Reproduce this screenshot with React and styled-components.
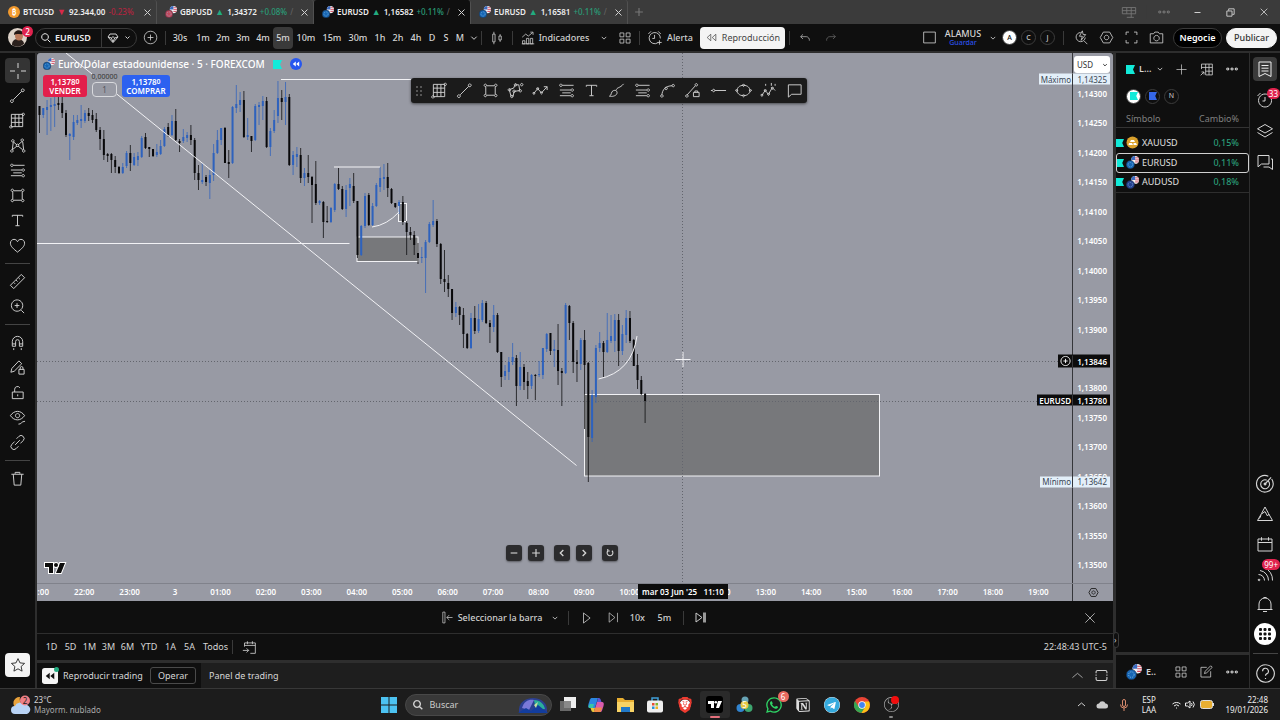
import { FaTelegram, FaWhatsapp } from "react-icons/fa";
import { SiBrave, SiNotion, SiObsstudio } from "react-icons/si";
import styled, { createGlobalStyle, css } from "styled-components";

const GlobalStyle = createGlobalStyle`
  * {
    box-sizing: border-box;
  }
  body {
    margin: 0;
    background: #0f0f0f;
    color: #d6d6d6;
    font: 9px/12px "Noto Sans", "Open Sans", sans-serif;
  }
  button, input, select {
    font: inherit;
    color: inherit;
    background: none;
    border: 0;
    margin: 0;
    padding: 0;
  }
  a {
    color: inherit;
    text-decoration: none;
  }
  svg {
    flex: none;
    display: block;
  }
`;

/* ---------- icons ---------- */

const iconPaths = {
  cross: "M9 1v5M9 12v5M1 9h5M12 9h5",
  line: "M4.5 13.5l9-9M3 13.5a1.5 1.5 0 1 0 .1 0M14.5 2a1.5 1.5 0 1 0 .1 0",
  grid: "M2.5 2.5h12v13h-12zM6.5 2.5v13M10.5 2.5v13M2.5 6.5h12M2.5 11h12M15 1.2a1.3 1.3 0 1 0 .1 0M2 14.5a1.3 1.3 0 1 0 .1 0",
  pattern:
    "M3.5 13.500L4.500 5.500M4.500 5l4 3.500M9.500 8.500L14 4.500M14.500 5l1 8.500M14.500 13.500l-5-4M8.500 9.500l-5 4M4 2.800a1.300 1.300 0 1 0 .1 0M14 2a1.300 1.300 0 1 0 .1 0M9 7.500a1.300 1.300 0 1 0 .1 0M3 13.500a1.300 1.300 0 1 0 .1 0M15.500 13.500a1.300 1.300 0 1 0 .1 0",
  fib: "M4.500 3.500h12M2 8.500h11.500M2 14.500h11.500M4.500 11.500h9M3 2.200a1.300 1.300 0 1 0 .1 0M15 7.200a1.300 1.300 0 1 0 .1 0M15 13.200a1.300 1.300 0 1 0 .1 0",
  rect: "M4 5v8M14 5v8M5 4h8M5 14h8M3.500 2.200a1.300 1.300 0 1 0 .1 0M14.500 2.200a1.300 1.300 0 1 0 .1 0M3.500 13a1.300 1.300 0 1 0 .1 0M14.500 13a1.300 1.300 0 1 0 .1 0",
  text: "M3.5 5V3.5h11V5M9 3.5v11M6.8 14.5h4.4",
  heart:
    "M9 16C5 12.8 1.5 10 1.5 6.600C1.500 4 3.400 2.500 5.300 2.500C7 2.500 8.400 3.500 9 5C9.600 3.500 11 2.500 12.700 2.500C14.600 2.500 16.500 4 16.500 6.600C16.500 10 13 12.800 9 16z",
  ruler: "M1.500 13l11.500-11.500 3.500 3.500-11.500 11.500zM5 10l1.500 1.500M7.500 7.500l1.500 1.500M10 5l1.500 1.500",
  zoomIn: "M8.500 2a6 6 0 1 0 .1 0M13 13l3 3M8.500 5.500v5M6 8h5",
  magnet:
    "M3.500 13V8a5.500 5.500 0 0 1 11 0v5h-3.500V8a2 2 0 0 0-4 0v5zM3.500 10.500h3.500M11 10.500h3.500M5 15v2M13 15v2",
  penLock: "M2 14l1-4 7.500-8 3 3-8 8zM10.500 11h5.500v5h-5.500zM11.800 11V9.500a1.500 1.500 0 0 1 3 0V11",
  unlock: "M3.500 8.500h11.500v7h-11.500zM6 8.500v-3a3 3 0 0 1 5.500-1.500M9.200 11v2",
  eyePen: "M1.500 7c4-6 11-6 15 0-4 6-11 6-15 0zM9 4.800a2.200 2.200 0 1 0 .1 0M10 16c3 .5 3-3 7-3",
  link: "M8 5l2.500-2.500a3 3 0 0 1 4.500 4.500L12 10M10 13l-2.500 2.500a3 3 0 0 1-4.500-4.500L6 8M6.500 11.500l5-5",
  trash: "M2.500 4.500h13M6.500 4V2.500h5V4M4.500 4.500l1 11.500h7l1-11.500",
  star: "M9 1.800l2.200 4.800 5.200.6-3.900 3.500 1.100 5.200L9 13.300l-4.600 2.600 1.100-5.200-3.900-3.500 5.200-.6z",
  search: "M7.500 2.500a5 5 0 1 0 .1 0M11.500 11.500l4 4",
  gem: "M4.500 3h9l3 4.500L9 16 1.500 7.500zM9 15L6.500 9 9 7l2.500 2zM2 7.500l4.500 1.500M16 7.500L11.500 9",
  chevron: "M5 7l4 4 4-4",
  chevronUp: "M2 12l7-6 7 6",
  left: "M11 4.500L6.500 9l4.500 4.500",
  right: "M7 4.500L11.500 9 7 13.500",
  plus: "M9 2v14M2 9h14",
  minus: "M3 9h12",
  circlePlus: "M9 1.500a7.500 7.500 0 1 0 .1 0M9 5.500v7M5.500 9h7",
  candles: "M3.500 4h3v10h-3zM5 1v3M5 14v3M11.500 6.500h3v5h-3zM13 4v2.500M13 11.500V14",
  indicators:
    "M2 16.500v-4h3v4zM7 16.500V9.500h3v7zM12 16.500v-7h3v7zM1.500 8L6 4l3.500 2.500L15 2M12 1.500h3.500V5M1 16.500h16",
  tiles: "M2.500 2.500h5v5h-5zM10.500 2.500h5v5h-5zM2.500 10.500h5v5h-5zM10.500 10.500h5v5h-5z",
  alert: "M12 14.500a6.300 6.300 0 1 1 3-5M8.500 5.500v4H6M1.500 4.500l3-3M12.500 1.500l3 3M14 11.500v5M11.500 14h5",
  rewind: "M8 4.500L3 9l5 4.500zM15 4.500L10 9l5 4.500z",
  undo: "M6 3.500L2.500 7 6 10.500M2.500 7H11a5 5 0 0 1 4.500 6",
  redo: "M12 3.500L15.500 7 12 10.500M15.500 7H7a5 5 0 0 0-4.500 6",
  frame: "M2 2.500h14v13H2z",
  maximize: "M1.500 6V4a2 2 0 0 1 2-2h11a2 2 0 0 1 2 2v2M1.500 11v3a2 2 0 0 0 2 2h11a2 2 0 0 0 2-2v-3M1.500 7.500v2M16.500 7.500v2",
  quick: "M8 3a5.500 5.500 0 1 0 5.500 6M12 13l4 4M10 1L6.500 7.500H10L8.500 12.500 14 5.500h-3z",
  settings: "M5.200 2.500h7.600L16.500 9l-3.700 6.500H5.200L1.500 9zM9 6.300a2.700 2.700 0 1 0 .1 0",
  expand: "M2.500 6V2.500H6M12 2.500h3.500V6M15.500 12v3.500H12M6 15.500H2.500V12",
  camera: "M1.500 4.500h4l1.500-2h4l1.500 2h4v11h-15zM9 6.500a3.300 3.300 0 1 0 .1 0",
  dots: "M3.500 7.700a1.300 1.300 0 1 0 .1 0M9 7.700a1.300 1.300 0 1 0 .1 0M14.500 7.700a1.300 1.300 0 1 0 .1 0",
  table: "M3 2.500h13v13H8M3 2.500v6M3 6.500h13M8 2.500v13M12 2.500v13M8 11h8M2 16l4-4M3 12h3v3",
  list: "M3 2h12v14.500l-6-3-6 3zM5.500 5.500h7M5.500 8.200h7M5.500 11h7",
  clock: "M9 3a6.500 6.500 0 1 0 .1 0M9 6v4H6.500M1.500 5l3-3M13.500 2l3 3",
  layers: "M9 2.500l7.500 4.300L9 11 1.500 6.800zM1.500 10.500L9 15l7.500-4.500",
  chat: "M2 2.500h11v8.500H5.500L2 13.800zM15 6h1.500v10.500L13 14H7.500",
  radar: "M15 4.500A7.500 7.500 0 1 1 12 2M12 6.500a4 4 0 1 1-1.500-1M9 9l5.500-6M9 8.200a.8.8 0 1 0 .1 0",
  pyramid: "M5.500 8.500L9 2l3.500 6.500M5.500 8.500L1.500 15.500h15L12.500 8.500M5.500 9l3.500-2.500 2.500 4.500 1.500-2M5 10.500l-1.500 3",
  calendar: "M2 4h14v12H2zM2 7.500h14M5.500 2.200v3.500M12.500 2.200v3.500",
  feed: "M3 14.200a.8.8 0 1 0 .1 0M2.500 9.500a6 6 0 0 1 6 6M4 5.500a10 10 0 0 1 8.500 10M8 2.500a13 13 0 0 1 8.500 13",
  bell: "M1.500 14.500h15M3 14.500V9a6 6 0 0 1 12 0v5.500M7.500 2.500h3M7 16.500h4",
  help: "M9 1.500a7.500 7.500 0 1 0 .1 0M6.500 7a2.500 2.500 0 1 1 3.500 2.300c-.8.500-1 .9-1 1.700M9 12.800v1",
  edit: "M10 3H2.500v12.500H15V8M7 11l1-3 7-7 2 2-7 7z",
  calGo: "M3 8V3.500h13V16h-6M3 6.500h13M6.500 1.500v3.500M12.500 1.500v3.500M1 12.500h7M5.500 10L8 12.500 5.500 15",
  selectBar: "M2.500 1.500h3v15h-3zM8 9h8M11.500 5.500L8 9l3.500 3.500",
  play: "M4.500 2.500L13 9l-8.500 6.500z",
  next: "M3 2.500L11 9l-8 6.500zM14.500 2.500v13",
  close: "M3 3l12 12M15 3L3 15",
  reset: "M5.500 5A5.200 5.200 0 1 0 12.500 5M5 2v3.500h3.500",
  polyShape:
    "M4 14.500L2.500 8 7 6.500 8.500 3l4 0 1 6-6 1-1 5zM15.500 1.500a1.300 1.300 0 1 0 .1 0M9 1.700a1.300 1.300 0 1 0 .1 0M2.500 7a1.300 1.300 0 1 0 .1 0M7.500 8.500a1.300 1.300 0 1 0 .1 0M14 8a1.300 1.300 0 1 0 .1 0M5 14a1.300 1.300 0 1 0 .1 0",
  zigzag: "M2 12l4-5 4 4.500L16 5M12.500 5H16v3.500M2 11a1 1 0 1 0 .1 0M6 6a1 1 0 1 0 .1 0M10 10.500a1 1 0 1 0 .1 0",
  brush: "M1.500 15c3-1 1-5 4.500-6s5 3 2 5-6.500 1-6.500 1zM8.500 9c1-4 4-2 8-7",
  curve: "M3 14C3.500 8 7 4 14 4M3 13.500a1.300 1.300 0 1 0 .1 0M15 2.500a1.300 1.300 0 1 0 .1 0M7.500 5.500a1.300 1.300 0 1 0 .1 0",
  lineLock: "M3 14L12 4M3 13.500a1.300 1.300 0 1 0 .1 0M13 1.700a1.300 1.300 0 1 0 .1 0M10 11h6v4.500h-6zM11.500 11V9.500h3V11",
  horizontal: "M1 9h1.500M5 9h12M3.800 7.700a1.300 1.300 0 1 0 .1 0",
  ellipse: "M9 3.500c9 0 9 11 0 11s-9-11 0-11M9 2.500a1 1 0 1 0 .1 0M9 13.500a1 1 0 1 0 .1 0M1.800 8a1 1 0 1 0 .1 0M16.200 8a1 1 0 1 0 .1 0",
  elliott: "M2 14l3.500-5 3.500 4 4-7 3 3M5.500 8a1 1 0 1 0 .1 0M9 12a1 1 0 1 0 .1 0M2 13a1 1 0 1 0 .1 0M13 5.500a1 1 0 1 0 .1 0M6 2v2M12 1v3M16 2v2",
  note: "M2.500 3h13.500v10H6l-3.500 3z",
  panels: "M1.500 4h15v7h-15zM6.500 4v7M11.500 4v11M6.500 15h8M1.500 7.500h15",
  windows: "M3 6.500h8.500v8.500H3zM6 6V3h9v9h-3",
};

function Icon({ name, size = 18, weight = 1 }) {
  return (
    <svg
      width={size}
      height={size}
      viewBox="0 0 18 18"
      fill="none"
      stroke="currentColor"
      strokeWidth={weight}
      aria-hidden="true"
    >
      <path d={iconPaths[name]} />
    </svg>
  );
}

function PairIcon({ size = 14, base = "#1866b4" }) {
  return (
    <svg width={size} height={size} viewBox="0 0 14 14" aria-hidden="true">
      <circle cx="9.800" cy="4.200" r="4.200" fill="#f4f1f3" />
      <path d="M9.800 2h3.500M9.800 4.200H14M9.800 6.400h3.500" stroke="#d3455b" strokeWidth="1" />
      <path d="M9.800 0A4.200 4.200 0 0 0 5.600 4.200H9.800z" fill="#3c6bc0" />
      <circle cx="4.700" cy="9.300" r="4.500" fill={base} stroke="#1b2536" strokeWidth=".5" />
      <circle cx="4.700" cy="9.300" r="2.400" fill="none" stroke="#8fc7e8" strokeWidth=".7" strokeDasharray="1 1" />
    </svg>
  );
}

function Flag({ color = "#12ead9", size = 9 }) {
  return (
    <svg width={size} height={size} viewBox="0 0 9 9" aria-hidden="true">
      <path d="M0 0h9L7 4.500 9 9H0z" fill={color} />
    </svg>
  );
}

function RewindBadge({ size = 12, bg = "#2757ef", fg = "#fff", square }) {
  return (
    <svg width={size} height={size} viewBox="0 0 12 12" aria-hidden="true">
      <rect width="12" height="12" rx={square ? 2 : 6} fill={bg} />
      <path d="M5.800 3.500v5L2.800 6zM9.200 3.500v5L6.200 6z" fill={fg} />
    </svg>
  );
}

/* ---------- shared parts ---------- */

const IconButton = styled.button`
  display: flex;
  flex: none;
  align-items: center;
  justify-content: center;
  gap: 4px;
  width: ${({ $width }) => ($width ? `${$width}px` : "auto")};
  height: 22px;
  color: ${({ $muted }) => ($muted ? "#777" : "#d0d0d0")};
`;

const Separator = styled.span`
  flex: none;
  width: 1px;
  height: 14px;
  background: #3a3a3a;
`;

const Spacer = styled.span`
  flex: 1;
`;

const Badge = styled.span`
  position: absolute;
  top: ${({ $top = 0 }) => $top}px;
  right: 0;
  min-width: 11px;
  height: 11px;
  padding: 0 2px;
  border-radius: 6px;
  background: ${({ $color = "#e0234e" }) => $color};
  color: #fff;
  font-size: 8px;
  line-height: 11px;
  text-align: center;
`;

const Page = styled.div`
  display: flex;
  flex-direction: column;
  min-height: 100vh;
`;

/* ---------- window tabs ---------- */

const TabStrip = styled.header`
  display: flex;
  align-items: center;
  height: 24px;
  background: #3b3b3b;
`;

const Tab = styled.div`
  display: flex;
  align-items: center;
  width: 157px;
  height: 24px;
  padding: 0 2px 0 8px;
  border-right: 1px solid #505050;
  border-radius: 3px 3px 0 0;
  ${({ $active }) =>
    $active &&
    css`
      background: #0f0f0f;
    `}
`;

const TabLink = styled.a`
  display: flex;
  flex: 1;
  align-items: center;
  gap: 3px;
  min-width: 0;
  overflow: hidden;
  color: #eee;
  font-size: 8px;
  font-weight: 600;
  white-space: nowrap;
`;

const Change = styled.span`
  color: ${({ $down }) => ($down ? "#b3243f" : "#2a9d78")};
  font-weight: 500;
`;

const TabDivider = styled.span`
  color: #666;
  font-weight: 400;
`;

const Arrow = styled.span`
  color: ${({ $down }) => ($down ? "#d8294a" : "#22ab80")};
  font-size: 9px;
`;

const BitcoinMark = styled.span`
  width: 12px;
  height: 12px;
  border-radius: 50%;
  background: #f29a2e;
  color: #fff;
  line-height: 12px;
  text-align: center;
`;

/* ---------- top toolbar ---------- */

const TopBar = styled.nav`
  display: flex;
  align-items: center;
  height: 29px;
  padding-right: 3px;
  border-bottom: 2px solid #2e2e2e;
  font-weight: 500;
`;

const Avatar = styled.button`
  position: relative;
  display: flex;
  align-items: center;
  width: 35px;
  height: 24px;
  padding-left: 8px;

  ${Badge} {
    right: 2px;
  }
`;

const SymbolSearch = styled.div`
  display: flex;
  align-items: center;
  width: 102px;
  height: 20px;
  border: 1px solid #3a3a3a;
  border-radius: 10px;
`;

const SymbolButton = styled.button`
  display: flex;
  align-items: center;
  gap: 3px;
  width: 66px;
  height: 18px;
  padding-left: 4px;
  border-right: 1px solid #3a3a3a;
  color: #eee;
  font-weight: 600;
`;

const Interval = styled.button`
  flex: none;
  width: ${({ $width }) => $width}px;
  height: 22px;
  font-weight: 500;
  ${({ $active }) =>
    $active &&
    css`
      border-radius: 4px;
      background: #3a3a3a;
    `}
`;

const ReplayToggle = styled.button`
  display: flex;
  flex: none;
  align-items: center;
  justify-content: center;
  gap: 4px;
  width: 85px;
  height: 22px;
  margin-right: 4px;
  border-radius: 4px;
  background: #f4f4f4;
  color: #444;
  font-weight: 400;
`;

const LayoutName = styled.button`
  display: flex;
  flex-direction: column;
  align-items: center;
  width: 46px;
  line-height: 10px;

  small {
    color: #2b50e8;
    font-size: 7px;
    line-height: 7px;
  }
`;

const RoundButton = styled.button`
  display: flex;
  align-items: center;
  justify-content: center;
  width: 15px;
  height: 15px;
  margin: 0 2px;
  border: 1px solid #3c3c3c;
  border-radius: 50%;
  background: ${({ $active }) => ($active ? "#fff" : "transparent")};
  color: ${({ $active }) => ($active ? "#111" : "#ccc")};
  font-size: 7px;
  line-height: 8px;
`;

const PillButton = styled.button`
  width: ${({ $filled }) => ($filled ? 51 : 49)}px;
  height: 20px;
  margin-left: 4px;
  border: 1px solid ${({ $filled }) => ($filled ? "#f4f4f4" : "#3a3a3a")};
  border-radius: 10px;
  background: ${({ $filled }) => ($filled ? "#f4f4f4" : "#000")};
  color: ${({ $filled }) => ($filled ? "#333" : "#fff")};
  font-weight: ${({ $filled }) => ($filled ? 500 : 600)};
`;

/* ---------- body ---------- */

const Body = styled.div`
  display: flex;
  flex: 1;
`;

const DrawRail = styled.aside`
  display: flex;
  flex: none;
  flex-direction: column;
  align-items: center;
  width: 37px;
  padding: 5px 0 11px;
  border-right: 2px solid #2e2e2e;
`;

const DrawTool = styled.button`
  display: flex;
  align-items: center;
  justify-content: center;
  width: 25px;
  height: 25px;
  border-radius: 4px;
  background: ${({ $active }) => ($active ? "#343434" : "transparent")};
`;

const RailRule = styled.hr`
  width: 25px;
  height: 1px;
  margin: ${({ $gap = 5 }) => $gap}px 0;
  border: 0;
  background: #444;
`;

const FavoriteTool = styled(DrawTool)`
  margin-top: auto;
  height: 24px;
  background: #f4f4f4;
  color: #222;
`;

const Center = styled.main`
  display: flex;
  flex: 1;
  flex-direction: column;
  min-width: 0;
`;

const ChartArea = styled.section`
  position: relative;
  display: flex;
  flex: 1;
  min-height: 530px;
  border-radius: 3px 3px 0 0;
  background: #989aa4;
`;

const Pane = styled.div`
  flex: 1;
  min-width: 0;
  border-right: 1px solid #35363a;

  > svg {
    width: 100%;
    height: 100%;
  }
`;

const PriceAxis = styled.div`
  display: flex;
  flex-direction: column;
  width: 40px;
  color: #fff;
  font-size: 8px;
  font-weight: 600;
`;

const CurrencySelect = styled.select`
  width: 36px;
  height: 17px;
  margin: 3px 0 0 1px;
  padding: 0 3px;
  border-radius: 3px;
  background: #fff;
  color: #333;
  font-size: 8px;
  font-weight: 400;
  appearance: none;
`;

const CurrencyWrap = styled.label`
  position: relative;
  display: block;
  height: 21px;

  svg {
    position: absolute;
    top: 8px;
    right: 4px;
    color: #222;
  }
`;

const PriceTicks = styled.ol`
  display: flex;
  flex: 1;
  flex-direction: column;
  justify-content: space-between;
  margin: 0;
  padding: 13px 6px 11px 0;
  list-style: none;
  line-height: 14px;
  text-align: right;
`;

const tagTones = {
  light: "background: #e3eff9; color: #3a4654;",
  dark: "background: #0c0c0c; color: #fff; font-weight: 600;",
};

const PriceTag = styled.div`
  position: absolute;
  right: 3px;
  display: flex;
  align-items: center;
  height: ${({ $tall }) => ($tall ? 13 : 11)}px;
  padding-left: 2px;
  font-size: 8px;
  transform: translateY(-50%);
  ${({ $tone }) => tagTones[$tone]}

  span:last-child {
    width: 38px;
    margin-left: 1px;
    padding-right: 3px;
    border-left: 1px solid #35363a;
    text-align: right;
  }
`;

const Legend = styled.div`
  position: absolute;
  top: 4px;
  left: 6px;
`;

const LegendTitle = styled.h1`
  display: flex;
  align-items: center;
  gap: 3px;
  height: 14px;
  margin: 0;
  color: #fff;
  font-size: 10px;
  font-weight: 500;

  svg:nth-of-type(2) {
    margin: 0 5px;
  }
`;

const TradeRow = styled.div`
  display: flex;
  gap: 5px;
  margin-top: 4px;
`;

const TradeButton = styled.button`
  width: ${({ $buy }) => ($buy ? 48 : 44)}px;
  height: 22px;
  border-radius: 3px;
  background: ${({ $buy }) => ($buy ? "#2c61f0" : "#e21f4b")};
  color: #fff;
  font-size: 8px;
  font-weight: 600;
  line-height: 9px;

  sup {
    font-size: 7px;
    line-height: 0;
    vertical-align: 1px;
  }
`;

const Quantity = styled.label`
  display: flex;
  flex-direction: column;
  align-items: center;
  width: 25px;
  margin-top: -3px;
  background: #989aa4;
  color: #333;
  font-size: 7px;
  line-height: 10px;

  input {
    width: 25px;
    height: 15px;
    border: 1px solid #d8d9dd;
    border-radius: 4px;
    color: #55575e;
    font-size: 8px;
    line-height: 12px;
    text-align: center;
  }
`;

const DrawingBar = styled.div`
  position: absolute;
  top: 25px;
  left: 374px;
  display: flex;
  align-items: center;
  height: 25px;
  padding-left: 4px;
  border-radius: 3px;
  background: #1b1b1b;
  box-shadow: 0 1px 3px #0008;
`;

const Grip = styled.span`
  width: 8px;
  height: 12px;
  margin-right: 4px;
  background: radial-gradient(#555 1px, transparent 1px) 0 0 / 4px 4px;
`;

const ChartNav = styled.div`
  position: absolute;
  bottom: 22px;
  left: 50%;
  display: flex;
  gap: 6px;
  transform: translateX(-50%);
  margin-left: -13px;
`;

const NavButton = styled.button`
  display: flex;
  align-items: center;
  justify-content: center;
  width: 16px;
  height: 16px;
  margin-right: ${({ $last }) => ($last ? 4 : 0)}px;
  border-radius: 3px;
  background: #2c2c2e;
  box-shadow: 0 1px 2px #0006;
`;

const ChartLogo = styled.div`
  position: absolute;
  left: 6px;
  bottom: 7px;
`;

const TimeAxis = styled.div`
  position: relative;
  display: flex;
  flex: none;
  height: 18px;
  border-top: 1px solid #80828b;
  background: #989aa4;
  color: #fff;
  font-size: 8px;
  font-weight: 600;
  line-height: 16px;
`;

const TimeTicksClip = styled.div`
  flex: 1;
  overflow: hidden;
  border-right: 1px solid #35363a;
`;

const TimeTicks = styled.ol`
  display: flex;
  margin: 0 11px 0 -21px;
  padding: 0;
  list-style: none;
  text-align: center;

  li {
    flex: 1;
  }
`;

const AxisSettings = styled.button`
  display: flex;
  align-items: center;
  justify-content: center;
  width: 40px;
  color: #222;
`;

const TimeTag = styled.div`
  position: absolute;
  top: 0;
  left: 601px;
  width: 90px;
  height: 15px;
  background: #0c0c0c;
  line-height: 16px;
  text-align: center;
  white-space: pre;
`;

const ReplayBar = styled.section`
  display: grid;
  grid-template-columns: 1fr auto 1fr;
  align-items: center;
  height: 33px;
  padding-top: 1px;
  border-bottom: 1px solid #2e2e2e;
  font-weight: 500;
`;

const ReplayControls = styled.div`
  display: flex;
  grid-column: 2;
  align-items: center;
`;

const CloseReplay = styled(IconButton)`
  justify-self: end;
  margin-right: 14px;
`;

const RangeBar = styled.section`
  display: flex;
  align-items: center;
  height: 26px;
  padding: 0 6px 0 5px;
`;

const RangeButton = styled.button`
  width: ${({ $width = 19 }) => $width}px;
  height: 20px;
`;

const TradingFooter = styled.footer`
  display: flex;
  align-items: center;
  height: 28px;
  border-top: 3px solid #2e2e2e;
  background: #1e1e1e;
`;

const ReplayTradingTab = styled.div`
  display: flex;
  align-items: center;
  gap: 5px;
  width: 164px;
  height: 25px;
  margin-right: 8px;
  padding: 0 5px;
  background: #0f0f0f;
`;

const TradeNow = styled.button`
  width: 46px;
  height: 17px;
  margin-left: auto;
  border: 1px solid #4a4a4a;
  border-radius: 3px;
  line-height: 14px;
`;

const ReplayMark = styled.span`
  position: relative;

  &::after {
    content: "";
    position: absolute;
    top: -1px;
    right: -1px;
    width: 5px;
    height: 5px;
    border-radius: 50%;
    background: #22ab80;
  }
`;

/* ---------- watchlist ---------- */

const Watchlist = styled.aside`
  position: relative;
  display: flex;
  flex: none;
  flex-direction: column;
  width: 137px;
  border-left: 3px solid #2e2e2e;
  border-right: 1px solid #2e2e2e;
`;

const ResizeHandle = styled.button`
  position: absolute;
  left: -3px;
  bottom: 40px;
  display: flex;
  align-items: center;
  width: 6px;
  height: 16px;
  border: 1px solid #3a3a3a;
  border-radius: 3px;
  background: #0f0f0f;
  font-size: 8px;
`;

const WatchHeader = styled.div`
  display: flex;
  align-items: center;
  height: 32px;
  padding-left: 10px;
  font-weight: 600;
`;

const ListName = styled.button`
  display: flex;
  align-items: center;
  gap: 4px;
  width: 42px;
`;

const ColorLists = styled.div`
  display: flex;
  height: 22px;
  padding-left: 8px;
  align-items: center;
`;

const SymbolTable = styled.table`
  width: 100%;
  border-collapse: collapse;

  th {
    height: 20px;
    padding: 4px 0 0;
    border-bottom: 1px solid #333;
    color: #808080;
    font-weight: 400;
    text-align: left;
  }
  th:last-child,
  td:last-child {
    padding-right: 10px;
    text-align: right;
  }
  td {
    height: 20px;
    padding: 0;
  }
  td:last-child {
    color: #2a9d78;
    font-weight: 500;
  }
  tbody::before {
    content: "";
    display: block;
    height: 5px;
  }
  tbody tr:last-child td {
    border-bottom: 1px solid #2e2e2e;
  }
`;

const SymbolRow = styled.tr`
  ${({ $active }) =>
    $active &&
    css`
      outline: 1px solid #d0d0d0;
      outline-offset: -1px;
      border-radius: 3px;
    `}
`;

const SymbolName = styled.a`
  display: flex;
  align-items: center;
  gap: 3px;
  color: #e0e0e0;
`;

const DetailsBar = styled.div`
  display: flex;
  align-items: center;
  height: 36px;
  margin-top: auto;
  padding-left: 10px;
  border-top: 3px solid #2e2e2e;
  font-weight: 600;
`;

const SideRail = styled.aside`
  display: flex;
  flex: none;
  flex-direction: column;
  align-items: center;
  width: 30px;
`;

const SideButton = styled.button`
  position: relative;
  display: flex;
  flex: none;
  align-items: center;
  justify-content: center;
  width: 30px;
  height: ${({ $tall }) => ($tall ? 31 : 30)}px;
`;

const SideChip = styled.span`
  display: flex;
  align-items: center;
  justify-content: center;
  width: ${({ $round }) => ($round ? 22 : 24)}px;
  height: ${({ $round }) => ($round ? 22 : 24)}px;
  border-radius: ${({ $round }) => ($round ? "50%" : "4px")};
  background: ${({ $round }) => ($round ? "#fff" : "#3a3a3a")};
  color: ${({ $round }) => ($round ? "#111" : "#eee")};
`;

/* ---------- taskbar ---------- */

const Taskbar = styled.footer`
  display: grid;
  grid-template-columns: 1fr auto 1fr;
  align-items: center;
  height: 32px;
  border-top: 1px solid #383838;
  background: #1c1c1c;
  font-size: 8px;
  line-height: 10px;
`;

const Weather = styled.button`
  position: relative;
  display: flex;
  align-items: center;
  justify-self: start;
  gap: 3px;
  padding-left: 11px;
  text-align: left;

  em {
    display: block;
    color: #aaa;
    font-style: normal;
  }
`;

const TaskApps = styled.div`
  display: flex;
  align-items: center;
`;

const TaskApp = styled.button`
  position: relative;
  display: flex;
  align-items: center;
  justify-content: center;
  width: ${({ $wide }) => ($wide ? 30 : 29)}px;
  height: 27px;
  border-radius: 3px;
  background: ${({ $active }) => ($active ? "#2a2a2a" : "transparent")};

  &::after {
    content: "";
    position: absolute;
    bottom: 0;
    width: ${({ $active }) => ($active ? 10 : 4)}px;
    height: 2px;
    border-radius: 1px;
    background: ${({ $active, $running }) =>
      $active ? "#e4707c" : $running ? "#888" : "transparent"};
  }
`;

const TaskSearch = styled.label`
  display: flex;
  align-items: center;
  gap: 6px;
  width: 147px;
  height: 22px;
  margin: 0 1px;
  padding: 0 2px 0 6px;
  border: 1px solid #484848;
  border-radius: 11px;
  background: #383838;

  input {
    flex: 1;
    min-width: 0;
    font-size: 9px;
  }
  input::placeholder {
    color: #ccc;
  }
`;

const Tray = styled.div`
  display: flex;
  align-items: center;
  justify-self: end;
  padding-right: 12px;
`;

const TrayText = styled.button`
  width: ${({ $wide }) => ($wide ? 46 : 30)}px;
  color: #eee;
  font-size: 8px;
  text-align: ${({ $wide }) => ($wide ? "right" : "center")};
`;

/* ---------- data ---------- */

const tabs = [
  { symbol: "BTCUSD", price: "92.344,00", change: "-0.23%", down: true, coin: true },
  { symbol: "GBPUSD", price: "1,34372", change: "+0.08%", base: "#c1485c" },
  { symbol: "EURUSD", price: "1,16582", change: "+0.11%", active: true },
  { symbol: "EURUSD", price: "1,16581", change: "+0.11%" },
];

const intervals = [
  ["30s", 26], ["1m", 20], ["2m", 20], ["3m", 20], ["4m", 20], ["5m", 20],
  ["10m", 26], ["15m", 26], ["30m", 26], ["1h", 18], ["2h", 18], ["4h", 18],
  ["D", 14], ["S", 14], ["M", 14],
];

const drawGroups = [
  ["cross", "line", "grid", "pattern", "fib", "rect", "text", "heart"],
  ["ruler", "zoomIn"],
  ["magnet", "penLock", "unlock", "eyePen", "link"],
  ["trash"],
];

const favoriteDrawings = [
  "grid", "line", "rect", "polyShape", "zigzag", "fib", "text", "brush",
  "fib", "curve", "lineLock", "horizontal", "ellipse", "elliott", "note",
];

const ranges = ["1D", "5D", "1M", "3M", "6M", "YTD", "1A", "5A", "Todos"];

const times = [
  "21:00", "22:00", "23:00", "3", "01:00", "02:00", "03:00", "04:00", "05:00",
  "06:00", "07:00", "08:00", "09:00", "10:00", "11:00", "12:00", "13:00",
  "14:00", "15:00", "16:00", "17:00", "18:00", "19:00",
];

const prices = Array.from({ length: 17 }, (_, i) => 114300 - i * 50);

const formatPrice = (p) => `${Math.floor(p / 100000)},${String(p % 100000).padStart(5, "0")}`;

// 50 points take 29.45px, 1,14300 sits 41px below the top of the pane
const priceToY = (p) => 41 + (114300 - p) * 0.589;

// high, body top, body bottom, low; a trailing "u" marks a rising bar
const bars = `
106 106 115 133,108 108 115 118 u,100 107 110 135 u,98 105 107 131 u,97 104 106 127 u,97 103 105 110,97 103 113 118,110 113 135 137,
133 134 136 160 u,115 122 137 140 u,115 120 123 125 u,105 119 121 128 u,110 113 121 123 u,108 113 116 121,110 115 120 123,113 119 130 132,
127 130 139 150,130 139 155 160,153 154 156 162,153 154 160 173,156 160 167 173,166 167 173 174,163 167 173 174 u,151 153 166 168 u,
145 153 163 171,153 157 165 166 u,152 156 160 166 u,136 138 157 158 u,133 137 148 149,147 147 149 157,149 149 156 157,144 152 155 157 u,
140 146 154 155 u,127 129 146 147 u,123 127 135 137,115 121 135 136 u,109 121 140 142,139 141 143 152,129 137 141 143 u,132 135 138 142 u,
125 135 140 145,138 140 173 180,165 173 180 190,163 180 182 184 u,175 177 182 186,170 175 183 199 u,144 153 175 181 u,130 140 153 154 u,
128 128 140 145 u,127 128 163 163,150 162 164 178,106 107 163 164 u,85 104 108 113 u,92 100 105 112 u,91 100 137 138,118 135 137 140 u,
136 136 141 152,104 106 140 141 u,102 105 107 125 u,96 101 106 120 u,97 101 147 148,128 131 147 156 u,110 120 131 133 u,81 98 116 123 u,
90 98 102 120,82 97 102 125 u,94 97 165 166,151 155 165 175 u,147 154 157 167 u,148 155 178 183,168 173 178 186 u,155 173 177 183,
176 177 185 223,161 184 203 205,200 201 203 205 u,201 202 222 238,206 221 222 223,207 208 222 223 u,183 184 210 212 u,168 184 189 190,
186 189 209 210,185 190 209 217 u,178 184 188 206 u,173 186 201 203,201 201 255 258,225 226 255 256 u,193 196 226 228 u,193 195 225 226,
203 206 225 226 u,183 185 206 207 u,167 178 187 192 u,164 177 179 190 u,163 177 188 197,188 189 203 204,203 203 207 208,200 202 206 214 u,
196 202 222 225,221 223 232 255,227 232 235 240,231 235 245 255,243 253 258 264,247 257 258 263 u,240 242 258 293 u,222 224 242 243 u,
200 221 225 227 u,219 221 244 247,243 244 279 284,250 279 282 292,275 283 289 297,289 289 313 320,302 307 313 317 u,306 307 315 325,
308 315 334 348,333 334 348 349,313 318 348 349 u,306 318 331 334,304 319 331 333 u,300 303 320 322 u,301 303 323 324,320 323 327 343,
305 315 327 332 u,313 315 352 353,352 352 377 387,365 371 376 380 u,357 362 372 380 u,343 357 362 365 u,355 358 386 406,352 367 386 390 u,
364 367 382 390,372 381 386 399,374 375 386 389 u,374 375 376 400,361 374 375 377 u,348 348 375 379 u,333 334 349 352 u,333 333 351 355,
340 349 351 367 u,324 350 371 385,368 371 373 406,303 305 373 374 u,305 306 323 340,321 323 362 373,350 362 364 382,338 340 364 370 u,
330 340 365 429,362 363 437 482,390 395 438 442 u,345 348 397 403 u,332 343 348 352 u,341 343 352 377,313 340 352 353 u,315 336 341 343 u,
314 320 341 352 u,314 320 351 366,325 334 351 355 u,310 318 335 343 u,311 318 341 343,339 340 366 366,354 365 380 389,376 380 394 395,393 394 401 423`
  .split(",")
  .map((bar) => {
    const [high, top, bottom, low, up] = bar.trim().split(" ");
    return { high: +high, top: +top, bottom: +bottom, low: +low, up: up === "u" };
  });

const symbols = [
  { name: "XAUUSD", change: "0,15%", gold: true },
  { name: "EURUSD", change: "0,11%", active: true },
  { name: "AUDUSD", change: "0,18%", base: "#26408f" },
];

/* ---------- chart ---------- */

function Candles() {
  return bars.map((bar, i) => {
    const x = 39.5 + i * 3.785;
    return (
      <g key={i} fill={bar.up ? "#2e62bd" : "#08080a"}>
        <rect x={x - 0.5} y={bar.high} width="1" height={bar.low - bar.high} opacity=".75" />
        <rect x={x - 1} y={bar.top} width="2" height={Math.max(bar.bottom - bar.top, 1)} />
      </g>
    );
  });
}

function PriceChart() {
  return (
    <svg role="img" aria-label="EURUSD 5m">
      <g transform="translate(-37 -53)">
        <g fill="#77787b" stroke="#f2f2f5">
          <rect x="357" y="237" width="61" height="24.500" />
          <rect x="398.500" y="203.500" width="8" height="18" fillOpacity=".6" />
          <rect x="584.500" y="394.500" width="295" height="81.500" />
        </g>
        <g stroke="#63656d" strokeDasharray="1 2">
          <path d="M37 361.500h1100M37 401.500h1100M682.500 53v540" />
        </g>
        <Candles />
        <g fill="none" stroke="#f2f2f5">
          <path d="M66 53L576.500 465.500" />
          <path d="M37 243.500H349.500M281 79.500H411M334 167H380" />
          <path d="M372 227Q387 225 399 212M598.500 379Q632 372 637 336" />
          <path d="M675.500 359.500h15M683 352v15" />
        </g>
      </g>
    </svg>
  );
}

function ChartSection() {
  return (
    <ChartArea>
      <Pane>
        <PriceChart />
      </Pane>
      <PriceAxis>
        <CurrencyWrap>
          <CurrencySelect aria-label="Divisa" defaultValue="USD">
            <option>USD</option>
          </CurrencySelect>
          <Icon name="chevron" size={8} weight={2} />
        </CurrencyWrap>
        <PriceTicks>
          {prices.map((price) => (
            <li key={price}>{formatPrice(price)}</li>
          ))}
        </PriceTicks>
      </PriceAxis>

      <PriceTag $tone="light" style={{ top: priceToY(114325) }}>
        <span>Máximo</span>
        <span>1,14325</span>
      </PriceTag>
      <PriceTag $tone="dark" $tall style={{ top: priceToY(113846) }}>
        <Icon name="circlePlus" size={11} weight={1.5} />
        <span>1,13846</span>
      </PriceTag>
      <PriceTag $tone="dark" style={{ top: priceToY(113780) }}>
        <span>EURUSD</span>
        <span>1,13780</span>
      </PriceTag>
      <PriceTag $tone="light" style={{ top: priceToY(113642) }}>
        <span>Mínimo</span>
        <span>1,13642</span>
      </PriceTag>

      <Legend>
        <LegendTitle>
          <PairIcon size={12} />
          Euro/Dólar estadounidense · 5 · FOREXCOM
          <Flag />
          <RewindBadge />
        </LegendTitle>
        <TradeRow>
          <TradeButton>
            1,1378<sup>0</sup>
            <br />
            VENDER
          </TradeButton>
          <Quantity>
            0,00000
            <input defaultValue="1" />
          </Quantity>
          <TradeButton $buy>
            1,1378<sup>0</sup>
            <br />
            COMPRAR
          </TradeButton>
        </TradeRow>
      </Legend>

      <DrawingBar>
        <Grip />
        {favoriteDrawings.map((name, i) => (
          <IconButton key={i} $width={i % 3 === 2 ? 26 : 25} aria-label={name}>
            <Icon name={name} size={17} />
          </IconButton>
        ))}
      </DrawingBar>

      <ChartNav>
        <NavButton aria-label="Alejar">
          <Icon name="minus" size={10} weight={2} />
        </NavButton>
        <NavButton $last aria-label="Acercar">
          <Icon name="plus" size={10} weight={2} />
        </NavButton>
        <NavButton aria-label="Izquierda">
          <Icon name="left" size={12} weight={2} />
        </NavButton>
        <NavButton $last aria-label="Derecha">
          <Icon name="right" size={12} weight={2} />
        </NavButton>
        <NavButton aria-label="Restablecer">
          <Icon name="reset" size={10} weight={2} />
        </NavButton>
      </ChartNav>

      <ChartLogo>
        <svg width="24" height="16" viewBox="0 0 24 16" role="img" aria-label="TradingView">
          <g fill="#0c0c0c" stroke="#fff" strokeWidth="2" paintOrder="stroke">
            <path d="M2 3h8v10H6V7H2zM17 3h5l-4 10h-5z" />
            <circle cx="13" cy="5" r="2" />
          </g>
        </svg>
      </ChartLogo>
    </ChartArea>
  );
}

/* ---------- page sections ---------- */

function WindowTabs() {
  return (
    <TabStrip>
      {tabs.map((tab, i) => (
        <Tab key={i} $active={tab.active}>
          <TabLink href="#">
            {tab.coin ? <BitcoinMark>₿</BitcoinMark> : <PairIcon size={12} base={tab.base} />}
            {tab.symbol}
            <Arrow $down={tab.down}>{tab.down ? "▼" : "▲"}</Arrow>
            {tab.price}
            <Change $down={tab.down}>{tab.change}</Change>
            {!tab.coin && <TabDivider>/</TabDivider>}
          </TabLink>
          <IconButton $width={14} aria-label="Cerrar pestaña">
            <Icon name="close" size={9} weight={2} />
          </IconButton>
        </Tab>
      ))}
      <IconButton $width={22} $muted aria-label="Nueva pestaña">
        <Icon name="plus" size={10} weight={2} />
      </IconButton>
      <Spacer />
      <IconButton $width={34} $muted aria-label="Paneles">
        <Icon name="panels" size={16} />
      </IconButton>
      <Separator />
      <IconButton $width={34} $muted aria-label="Más">
        <Icon name="dots" size={14} weight={1.5} />
      </IconButton>
      <IconButton $width={33} aria-label="Minimizar">
        <Icon name="minus" size={9} weight={2} />
      </IconButton>
      <IconButton $width={33} aria-label="Restaurar">
        <Icon name="windows" size={11} weight={1.5} />
      </IconButton>
      <IconButton $width={33} aria-label="Cerrar">
        <Icon name="close" size={10} weight={1.5} />
      </IconButton>
    </TabStrip>
  );
}

function Toolbar() {
  return (
    <TopBar>
      <Avatar aria-label="Perfil">
        <svg width="19" height="19" viewBox="0 0 19 19">
          <circle cx="9.500" cy="9.500" r="9.500" fill="#ddd2c8" />
          <path d="M4 17c0-5 3-6 6-6s6 2 6 5a9.500 9.500 0 0 1-12 1z" fill="#2b211d" />
          <ellipse cx="11" cy="8" rx="4" ry="4.500" fill="#b9795b" />
          <path d="M6 7c0-6 9-6 9-1-3 1-6-1-9 1z" fill="#241714" />
        </svg>
        <Badge>2</Badge>
      </Avatar>
      <SymbolSearch>
        <SymbolButton>
          <Icon name="search" size={12} weight={1.5} />
          EURUSD
        </SymbolButton>
        <IconButton $width={34} aria-label="Instrumento">
          <Icon name="gem" size={12} weight={1.5} />
          <Icon name="chevron" size={9} weight={2} />
        </IconButton>
      </SymbolSearch>
      <IconButton $width={26} aria-label="Comparar">
        <Icon name="circlePlus" size={15} />
      </IconButton>
      <IconButton $width={4}>
        <Separator />
      </IconButton>
      {intervals.map(([label, width]) => (
        <Interval key={label} $width={width} $active={label === "5m"}>
          {label}
        </Interval>
      ))}
      <IconButton $width={14} aria-label="Más intervalos">
        <Icon name="chevron" size={12} weight={1.5} />
      </IconButton>
      <Separator />
      <IconButton $width={30} aria-label="Velas">
        <Icon name="candles" size={14} />
      </IconButton>
      <Separator />
      <IconButton $width={84}>
        <Icon name="indicators" size={14} />
        Indicadores
      </IconButton>
      <IconButton $width={14} aria-label="Plantillas">
        <Icon name="chevron" size={10} weight={1.5} />
      </IconButton>
      <IconButton $width={28} aria-label="Diseños">
        <Icon name="tiles" size={14} />
      </IconButton>
      <Separator />
      <IconButton $width={60}>
        <Icon name="alert" size={16} />
        Alerta
      </IconButton>
      <ReplayToggle>
        <Icon name="rewind" size={13} />
        Reproducción
      </ReplayToggle>
      <Separator />
      <IconButton $width={30} aria-label="Deshacer">
        <Icon name="undo" size={12} />
      </IconButton>
      <IconButton $width={22} $muted aria-label="Rehacer">
        <Icon name="redo" size={12} />
      </IconButton>
      <Spacer />
      <IconButton $width={22} aria-label="Disposición">
        <Icon name="frame" size={15} />
      </IconButton>
      <LayoutName>
        ALAMUS
        <small>Guardar</small>
      </LayoutName>
      <IconButton $width={14} aria-label="Diseños guardados">
        <Icon name="chevron" size={10} weight={1.5} />
      </IconButton>
      <RoundButton $active>A</RoundButton>
      <RoundButton>C</RoundButton>
      <RoundButton>J</RoundButton>
      <IconButton $width={12}>
        <Separator />
      </IconButton>
      {["quick", "settings", "expand", "camera"].map((name) => (
        <IconButton key={name} $width={25} aria-label={name}>
          <Icon name={name} size={15} />
        </IconButton>
      ))}
      <PillButton>Negocie</PillButton>
      <PillButton $filled>Publicar</PillButton>
    </TopBar>
  );
}

function DrawingTools() {
  return (
    <DrawRail>
      {drawGroups.map((group, i) => (
        <div key={i}>
          {i > 0 && <RailRule />}
          {group.map((name) => (
            <DrawTool key={name} $active={name === "cross"} aria-label={name}>
              <Icon name={name} size={name === "cross" ? 18 : 17} />
            </DrawTool>
          ))}
        </div>
      ))}
      <FavoriteTool aria-label="Favoritos">
        <Icon name="star" size={16} />
      </FavoriteTool>
    </DrawRail>
  );
}

function BottomBars() {
  return (
    <>
      <TimeAxis>
        <TimeTicksClip>
          <TimeTicks>
            {times.map((time) => (
              <li key={time}>{time}</li>
            ))}
          </TimeTicks>
        </TimeTicksClip>
        <AxisSettings aria-label="Ajustes de la escala">
          <Icon name="settings" size={11} weight={1.5} />
        </AxisSettings>
        <TimeTag>{"mar 03 Jun '25   11:10"}</TimeTag>
      </TimeAxis>
      <ReplayBar>
        <ReplayControls>
          <IconButton>
            <Icon name="selectBar" size={13} />
            Seleccionar la barra
          </IconButton>
          <IconButton $width={26} aria-label="Opciones">
            <Icon name="chevron" size={10} weight={1.5} />
          </IconButton>
          <Separator />
          <IconButton $width={36} aria-label="Reproducir">
            <Icon name="play" size={14} />
          </IconButton>
          <IconButton $width={16} aria-label="Avanzar">
            <Icon name="next" size={13} />
          </IconButton>
          <IconButton $width={32}>10x</IconButton>
          <IconButton $width={22}>5m</IconButton>
          <IconButton $width={16}>
            <Separator />
          </IconButton>
          <IconButton $width={18} aria-label="Tiempo real">
            <svg width="13" height="13" viewBox="0 0 13 13">
              <path d="M2 2l6 4.500L2 11z" fill="none" stroke="#ccc" />
              <path d="M9 1.500h3v10H9z" fill="#999" />
            </svg>
          </IconButton>
        </ReplayControls>
        <CloseReplay $width={18} aria-label="Cerrar reproducción">
          <Icon name="close" size={14} />
        </CloseReplay>
      </ReplayBar>
      <RangeBar>
        {ranges.map((range) => (
          <RangeButton key={range} $width={range.length > 2 ? (range === "Todos" ? 33 : 24) : 19}>
            {range}
          </RangeButton>
        ))}
        <Separator />
        <IconButton $width={32} aria-label="Ir a la fecha">
          <Icon name="calGo" size={15} />
        </IconButton>
        <Spacer />
        <button>22:48:43 UTC-5</button>
      </RangeBar>
      <TradingFooter>
        <ReplayTradingTab>
          <ReplayMark>
            <RewindBadge size={16} bg="#f4f4f4" fg="#111" square />
          </ReplayMark>
          Reproducir trading
          <TradeNow>Operar</TradeNow>
        </ReplayTradingTab>
        <button>Panel de trading</button>
        <Spacer />
        <IconButton $width={24} aria-label="Abrir panel">
          <Icon name="chevronUp" size={13} />
        </IconButton>
        <IconButton $width={24} aria-label="Maximizar panel">
          <Icon name="maximize" size={13} weight={1.5} />
        </IconButton>
      </TradingFooter>
    </>
  );
}

function WatchlistPanel() {
  return (
    <Watchlist>
      <ResizeHandle aria-label="Ocultar panel">›</ResizeHandle>
      <WatchHeader>
        <ListName>
          <Flag />
          L...
          <Icon name="chevron" size={10} weight={1.5} />
        </ListName>
        <IconButton $width={26} aria-label="Añadir símbolo">
          <Icon name="plus" size={13} />
        </IconButton>
        <IconButton $width={25} aria-label="Columnas">
          <Icon name="table" size={15} />
        </IconButton>
        <IconButton $width={25} aria-label="Más">
          <Icon name="dots" size={14} weight={1.5} />
        </IconButton>
      </WatchHeader>
      <ColorLists>
        <RoundButton $active aria-label="Lista turquesa">
          <Flag size={8} />
        </RoundButton>
        <RoundButton aria-label="Lista azul">
          <Flag color="#3567e8" size={8} />
        </RoundButton>
        <RoundButton>N</RoundButton>
      </ColorLists>
      <SymbolTable>
        <colgroup>
          <col width="10" />
          <col />
          <col />
        </colgroup>
        <thead>
          <tr>
            <th aria-label="Marca" />
            <th>Símbolo</th>
            <th>Cambio%</th>
          </tr>
        </thead>
        <tbody>
          {symbols.map((symbol) => (
            <SymbolRow key={symbol.name} $active={symbol.active}>
              <td>
                <Flag size={8} />
              </td>
              <td>
                <SymbolName href="#">
                  {symbol.gold ? (
                    <svg width="13" height="13" viewBox="0 0 13 13">
                      <circle cx="6.500" cy="6.500" r="6" fill="#d9a02c" />
                      <path d="M5 4h3l1 2H4zM3 7h3l1 2H2.500zM7.500 7h2.500l1 2H7.500z" fill="#fff" />
                    </svg>
                  ) : (
                    <PairIcon size={13} base={symbol.base} />
                  )}
                  {symbol.name}
                </SymbolName>
              </td>
              <td>{symbol.change}</td>
            </SymbolRow>
          ))}
        </tbody>
      </SymbolTable>
      <DetailsBar>
        <ListName>
          <PairIcon size={16} />
          E..
        </ListName>
        <IconButton $width={25} aria-label="Cuadrícula">
          <Icon name="tiles" size={14} />
        </IconButton>
        <IconButton $width={26} aria-label="Editar nota">
          <Icon name="edit" size={14} />
        </IconButton>
        <IconButton $width={25} aria-label="Más">
          <Icon name="dots" size={14} weight={1.5} />
        </IconButton>
      </DetailsBar>
    </Watchlist>
  );
}

function RightRail() {
  return (
    <SideRail>
      <SideButton $tall aria-label="Lista de seguimiento">
        <SideChip>
          <Icon name="list" />
        </SideChip>
      </SideButton>
      <SideButton $tall aria-label="Alertas">
        <Icon name="clock" />
        <Badge $top={4}>33</Badge>
      </SideButton>
      <SideButton $tall aria-label="Árbol de objetos">
        <Icon name="layers" />
      </SideButton>
      <SideButton $tall aria-label="Chats">
        <Icon name="chat" />
      </SideButton>
      <Spacer />
      {["radar", "pyramid", "calendar", "feed", "bell"].map((name) => (
        <SideButton key={name} aria-label={name}>
          <Icon name={name} size={name === "radar" ? 20 : 18} />
          {name === "feed" && <Badge>99+</Badge>}
        </SideButton>
      ))}
      <SideButton aria-label="Productos">
        <SideChip $round>
          <svg width="12" height="12" viewBox="0 0 12 12" fill="currentColor">
            {[0, 4.5, 9].map((y) =>
              [0, 4.5, 9].map((x) => <rect key={`${x}-${y}`} x={x} y={y} width="3" height="3" rx="1" />)
            )}
          </svg>
        </SideChip>
      </SideButton>
      <RailRule $gap={4} />
      <SideButton aria-label="Ayuda">
        <Icon name="help" size={21} />
      </SideButton>
    </SideRail>
  );
}

function WindowsTaskbar() {
  return (
    <Taskbar>
      <Weather>
        <svg width="20" height="20" viewBox="0 0 20 20">
          <path d="M9 2a6 6 0 1 0 5 8C10 10 8 6 9 2z" fill="#e9a23b" />
          <path d="M4 19a4 4 0 0 1 0-8 5 5 0 0 1 9-1 4.500 4.500 0 0 1 3 9z" fill="#b9d3f5" />
          <circle cx="14" cy="5.500" r="5" fill="#ee7f86" />
          <text x="14" y="8.500" fill="#222" fontSize="8" textAnchor="middle">
            2
          </text>
        </svg>
        <span>
          23°C
          <em>Mayorm. nublado</em>
        </span>
      </Weather>
      <TaskApps>
        <TaskApp aria-label="Inicio">
          <svg width="16" height="16" viewBox="0 0 16 16" fill="#4cc2f1">
            <path d="M0 0h7.500v7.500H0zM8.500 0H16v7.500H8.500zM0 8.500h7.500V16H0zM8.500 8.500H16V16H8.500z" />
          </svg>
        </TaskApp>
        <TaskSearch>
          <Icon name="search" size={12} weight={2} />
          <input placeholder="Buscar" />
          <svg width="32" height="18" viewBox="0 0 32 18">
            <path d="M2 16C1 7 8 2 16 2s15 5 14 14z" fill="#2b3f91" />
            <path d="M5 12c2-7 7-9 12-8l-5 10z" fill="#7a79d8" />
            <path d="M17 4c6 0 10 4 11 9l-9 1z" fill="#2bae9a" />
            <path d="M1 17l8-5 5 3 7-6 10 8z" fill="#123d9e" />
            <path d="M15 6l2 3 4-3-2 6z" fill="#c8dda0" />
          </svg>
        </TaskSearch>
        <TaskApp aria-label="Vista de tareas">
          <svg width="17" height="17" viewBox="0 0 17 17">
            <path d="M5 1h12v11H5z" fill="#eee" />
            <path d="M1 5h11v10H1z" fill="#777" opacity=".85" />
          </svg>
        </TaskApp>
        <TaskApp aria-label="Copilot">
          <svg width="16" height="16" viewBox="0 0 16 16">
            <path d="M4 1h6l-3 10H2C0 11 0 9 .5 7L2 2.500C2.400 1.500 3 1 4 1z" fill="#2b86e0" />
            <path d="M2 7h4l-1 4H2C0 11 0 9 2 7z" fill="#38c5a5" />
            <path d="M12 15H6L9 5h5c2 0 2 2 1.500 4L14 13.500c-.4 1-1 1.500-2 1.500z" fill="#d95cae" />
            <path d="M6 15l1.500-4.500H14L12.500 15z" fill="#f08b45" />
            <path d="M10 1h1c1 0 1.500 1 1.800 2l.7 2H9z" fill="#5a55d8" />
            <path d="M6 15H5c-1 0-1.500-1-1.800-2l-.7-2H7z" fill="#e6c63d" />
          </svg>
        </TaskApp>
        <TaskApp $wide aria-label="Explorador">
          <svg width="17" height="15" viewBox="0 0 17 15">
            <path d="M0 1h6l2 2h9v12H0z" fill="#e8ae31" />
            <path d="M0 5h17v10H0z" fill="#f8d365" />
            <path d="M4 10h9v5H4z" fill="#2179c8" />
          </svg>
        </TaskApp>
        <TaskApp aria-label="Microsoft Store">
          <svg width="16" height="16" viewBox="0 0 16 16">
            <path d="M5 4V1h6v3" fill="none" stroke="#3f9fd8" strokeWidth="1.500" />
            <rect y="3.500" width="16" height="12" rx="2" fill="#eee" />
            <path d="M5 6h2.500v2.500H5z" fill="#e64c36" />
            <path d="M8.500 6H11v2.500H8.500z" fill="#7fb62b" />
            <path d="M5 9.500h2.500V12H5z" fill="#2794dc" />
            <path d="M8.500 9.500H11V12H8.500z" fill="#f0b323" />
          </svg>
        </TaskApp>
        <TaskApp $wide aria-label="Brave">
          <SiBrave size={16} color="#ee3b30" style={{ background: "radial-gradient(#fff 5px, transparent 6px)" }} />
        </TaskApp>
        <TaskApp $wide $active aria-label="TradingView">
          <svg width="17" height="17" viewBox="0 0 17 17">
            <rect width="17" height="17" rx="3" fill="#000" />
            <path d="M2 5h6v7H5V8H2zM12 5h4l-3 7H10z" fill="#fff" />
            <circle cx="9.800" cy="6.300" r="1.300" fill="#fff" />
          </svg>
        </TaskApp>
        <TaskApp aria-label="Mercado">
          <svg width="17" height="17" viewBox="0 0 17 17">
            <circle cx="9" cy="4" r="3.500" fill="#67a3b5" />
            <circle cx="4.500" cy="12" r="4" fill="#3184d0" />
            <circle cx="12.500" cy="12" r="4" fill="#3da56f" />
            <circle cx="8.500" cy="9" r="4" fill="#e6c744" />
            <text x="8.500" y="12" fill="#fff" fontSize="8" textAnchor="middle">
              5
            </text>
          </svg>
        </TaskApp>
        <TaskApp $wide aria-label="WhatsApp">
          <FaWhatsapp size={18} color="#2fd566" />
          <Badge $color="#e86a60">6</Badge>
        </TaskApp>
        <TaskApp aria-label="Notion">
          <SiNotion size={14} color="#ddd" />
        </TaskApp>
        <TaskApp aria-label="Telegram">
          <FaTelegram size={16} color="#35aadd" style={{ background: "#fff", borderRadius: "50%" }} />
        </TaskApp>
        <TaskApp $wide aria-label="Chrome">
          <svg width="16" height="16" viewBox="0 0 16 16">
            <circle cx="8" cy="8" r="8" fill="#e94435" />
            <path d="M1 4a8 8 0 0 0 6.500 12L11.500 9.500H4.500z" fill="#35a853" />
            <path d="M15 4.500A8 8 0 0 1 7.500 16l4-6.500-1-5z" fill="#fbc116" />
            <circle cx="8" cy="8" r="3.700" fill="#fff" />
            <circle cx="8" cy="8" r="2.900" fill="#4285f4" />
          </svg>
        </TaskApp>
        <TaskApp $running aria-label="OBS Studio">
          <SiObsstudio size={15} color="#aaa" />
          <svg width="8" height="8" viewBox="0 0 8 8" style={{ marginLeft: -8, marginTop: -10 }}>
            <circle cx="4" cy="4" r="4" fill="#f20d0d" />
          </svg>
        </TaskApp>
      </TaskApps>
      <Tray>
        <IconButton $width={20} aria-label="Iconos ocultos">
          <Icon name="chevronUp" size={9} weight={2} />
        </IconButton>
        <IconButton $width={22} aria-label="OneDrive">
          <svg width="12" height="9" viewBox="0 0 12 9">
            <path d="M3 8.500a2.500 2.500 0 0 1 0-5 3.500 3.500 0 0 1 6.500 0 2.500 2.500 0 0 1 0 5z" fill="#ccc" />
          </svg>
        </IconButton>
        <IconButton $width={21} aria-label="Micrófono">
          <svg width="8" height="12" viewBox="0 0 8 12" fill="none" stroke="#d98b6d">
            <rect x="2.500" y=".5" width="3" height="7" rx="1.500" />
            <path d="M.5 5.500a3.500 3.500 0 0 0 7 0M4 9v3" />
          </svg>
        </IconButton>
        <TrayText>
          ESP
          <br />
          LAA
        </TrayText>
        <IconButton $width={58} aria-label="Red, volumen y batería">
          <svg width="9" height="8" viewBox="0 0 9 8" fill="none" stroke="#eee">
            <path d="M.5 3a6 6 0 0 1 8 0M2 5a3.500 3.500 0 0 1 5 0M4 7h1" />
          </svg>
          <svg width="11" height="9" viewBox="0 0 11 9" fill="none" stroke="#eee">
            <path d="M.5 3h2L5 1v7L2.500 6h-2zM6.500 3a2.500 2.500 0 0 1 0 3M8 1.500a4.500 4.500 0 0 1 0 6" />
          </svg>
          <svg width="14" height="9" viewBox="0 0 14 9">
            <rect x=".5" y=".5" width="12" height="8" rx="2" fill="#e8ae31" stroke="#ddd" />
            <path d="M13.500 3v3" stroke="#ddd" />
          </svg>
        </IconButton>
        <TrayText $wide>
          22:48
          <br />
          19/01/2026
        </TrayText>
      </Tray>
    </Taskbar>
  );
}

function App() {
  return (
    <Page>
      <GlobalStyle />
      <WindowTabs />
      <Toolbar />
      <Body>
        <DrawingTools />
        <Center>
          <ChartSection />
          <BottomBars />
        </Center>
        <WatchlistPanel />
        <RightRail />
      </Body>
      <WindowsTaskbar />
    </Page>
  );
}

export default App;
